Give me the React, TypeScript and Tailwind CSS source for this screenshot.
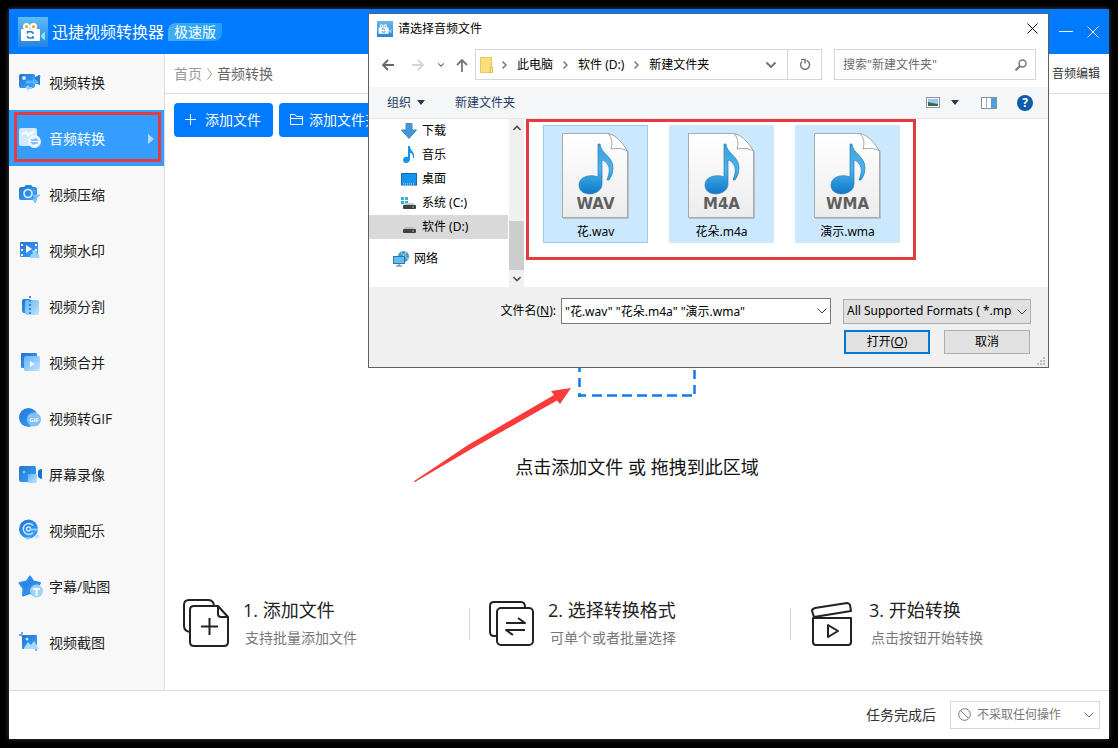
import type { ReactNode } from 'react'

interface NavItem {
  label: string
  icon: ReactNode
}

const NAV_ITEMS: NavItem[] = [
  {
    label: '视频转换',
    icon: (
      <>
        <rect x="0" y="2" width="16" height="14" rx="2" fill="url(#deep)" />
        <circle cx="5" cy="6" r="2" fill="#cfe8ff" />
        <path d="M16 5 L20 3 Q22 3 21 6 V13 L16 11 Z" fill="#1f7fdc" />
        <path d="M8 8.500 H14 V6 L20 10 L14 14 V11.500 H6 Z" fill="#51b4ff" />
        <path d="M6 15 L10 13 V15 H13 V17 H10 V19 Z" fill="#8fd0ff" />
      </>
    ),
  },
  {
    label: '音频转换',
    icon: (
      <>
        <rect x="0" y="0" width="18" height="18" rx="2" fill="#d3e8ff" />
        <path d="M3 6 L7 4 L9 7 L15 3" stroke="#fff" strokeWidth="2" fill="none" />
        <circle cx="15.500" cy="13.500" r="6.500" fill="#eef6ff" />
        <path d="M12 12 H18 L16 10.500 M19 15 H13 L15 16.500" stroke="#6db5fa" strokeWidth="1.300" fill="none" />
      </>
    ),
  },
  {
    label: '视频压缩',
    icon: (
      <>
        <path d="M5 3 L7 1 H12 L14 3 H16 Q18 3 18 5 V14 Q18 16 16 16 H2 Q0 16 0 14 V5 Q0 3 2 3 Z" fill="url(#deep)" />
        <circle cx="9" cy="9.500" r="4" fill="none" stroke="#d5ecff" strokeWidth="1.700" />
        <path d="M14 6 L16 7 M14 11.500 L21 11 L17 14.500 Z M14 15 L18 15 L16 19 Z" fill="#7cc4ff" stroke="#7cc4ff" />
      </>
    ),
  },
  {
    label: '视频水印',
    icon: (
      <>
        <rect x="1" y="2" width="18" height="15" rx="1" fill="url(#deep)" />
        <path d="M3 4 V16 M17 4 V12" stroke="#e8f5ff" strokeWidth="2" strokeDasharray="2 3" />
        <path d="M7 5 L13 9 L7 13 Z" fill="#fff" />
        <path d="M11 18 Q11 14 14 13.500 Q12 11 15 10 Q19 10 17.500 13.500 Q21 14 20.500 18 Z" fill="#9ad2ff" />
      </>
    ),
  },
  {
    label: '视频分割',
    icon: (
      <>
        <rect x="3" y="3" width="9" height="14" rx="2" fill="url(#deep)" />
        <rect x="6" y="4" width="14" height="15" rx="2" fill="url(#pale)" />
        <path d="M11 0 V20" stroke="#1670d8" strokeWidth="1.500" strokeDasharray="2 2" />
      </>
    ),
  },
  {
    label: '视频合并',
    icon: (
      <>
        <rect x="2" y="1" width="16" height="15" rx="1" fill="url(#deep)" />
        <rect x="5" y="4" width="16" height="15" rx="2" fill="url(#pale)" />
        <path d="M11 9 L16 12 L11 15 Z" fill="#e6fbff" />
      </>
    ),
  },
  {
    label: '视频转GIF',
    icon: (
      <>
        <circle cx="9.500" cy="9.500" r="9.500" fill="url(#deep)" />
        <circle cx="15" cy="11.500" r="7" fill="#7fc2fb" />
        <text x="15" y="14" fontSize="6" fontWeight="bold" textAnchor="middle" fill="#fff">GIF</text>
      </>
    ),
  },
  {
    label: '屏幕录像',
    icon: (
      <>
        <rect x="0" y="2" width="17" height="16" rx="2" fill="url(#deep)" />
        <circle cx="5" cy="8" r="1.500" fill="#6fc5ff" />
        <path d="M19 8 Q19 5 23 5 V15 Q19 14 19 12 Z" fill="#1272da" />
        <rect x="9" y="10" width="9" height="9" rx="1" fill="url(#pale)" />
      </>
    ),
  },
  {
    label: '视频配乐',
    icon: (
      <>
        <circle cx="9.500" cy="9" r="9.500" fill="url(#deep)" />
        <path d="M14 5.500 A5.500 5.500 0 1 0 14 12.500" fill="none" stroke="#cfe9ff" strokeWidth="1.500" />
        <circle cx="9.500" cy="9" r="2" fill="none" stroke="#cfe9ff" strokeWidth="1.500" />
        <path d="M11 8.500 H19 V10.500 H11 Z M5 17.500 L9 20 L12 17.500 Z" fill="#8fd0ff" />
        <circle cx="18" cy="16.500" r="2" fill="#bfe0fb" />
      </>
    ),
  },
  {
    label: '字幕/贴图',
    icon: (
      <>
        <path
          d="M11 0.500 L14.500 5.500 L21 7 L17.500 12.500 L17.500 19 L11 17 L4 19.500 L4.500 12.500 L0.500 7 L7.500 5.500 Z"
          fill="url(#deep)"
          stroke="#2b8ff0"
          strokeWidth="2"
          strokeLinejoin="round"
        />
        <circle cx="17.500" cy="15" r="6.500" fill="#9fd2fb" />
        <path d="M14 13 H21 M17.500 13 V19.500" stroke="#fff" strokeWidth="2" />
      </>
    ),
  },
  {
    label: '视频截图',
    icon: (
      <>
        <rect x="3" y="3" width="15" height="14" rx="1" fill="url(#deep)" />
        <path d="M0 3 H2 M3 0 V5 M17 15 V19" stroke="#2d8ff0" strokeWidth="1.300" />
        <path d="M5 16 L9 10 L12 13 L15 9 L20 17 H5 Z" fill="#a9dbff" />
        <circle cx="8" cy="7" r="1.500" fill="#bfe5ff" />
      </>
    ),
  },
]

const ACTIVE_LABEL = '音频转换'

const FILES = [
  { name: '花.wav', type: 'WAV', focused: true },
  { name: '花朵.m4a', type: 'M4A', focused: false },
  { name: '演示.wma', type: 'WMA', focused: false },
]

const STEPS = [
  { title: '1. 添加文件', desc: '支持批量添加文件', icon: <AddFileIcon /> },
  { title: '2. 选择转换格式', desc: '可单个或者批量选择', icon: <FormatIcon /> },
  { title: '3. 开始转换', desc: '点击按钮开始转换', icon: <ClapperIcon /> },
]

function Gradients() {
  return (
    <svg className="absolute h-0 w-0" aria-hidden="true">
      <defs>
        <linearGradient id="deep" x1="0" y1="0" x2="1" y2="1">
          <stop offset="0" stopColor="#2474cf" />
          <stop offset="1" stopColor="#3ba4ff" />
        </linearGradient>
        <linearGradient id="pale" x1="0" y1="0" x2="1" y2="1">
          <stop offset="0" stopColor="#5fb4fb" />
          <stop offset="1" stopColor="#c3e4ff" />
        </linearGradient>
        <linearGradient id="note" x1="0" y1="0" x2="0" y2="1">
          <stop offset="0" stopColor="#3f9fd8" />
          <stop offset="0.500" stopColor="#49b4ee" />
          <stop offset="1" stopColor="#0f78c8" />
        </linearGradient>
        <linearGradient id="paper" x1="0" y1="0" x2="0" y2="1">
          <stop offset="0" stopColor="#ffffff" />
          <stop offset="1" stopColor="#ececec" />
        </linearGradient>
        <linearGradient id="logo" x1="0" y1="0" x2="0" y2="1">
          <stop offset="0" stopColor="#5fbcf5" />
          <stop offset="1" stopColor="#2583e2" />
        </linearGradient>
      </defs>
    </svg>
  )
}

function Logo({ className }: { className: string }) {
  return (
    <svg viewBox="0 0 30 30" className={className} aria-hidden="true">
      <rect width="30" height="30" fill="url(#logo)" />
      <circle cx="8.500" cy="9.500" r="3.500" fill="#fff" />
      <circle cx="15.500" cy="9.500" r="3.500" fill="#fff" />
      <circle cx="8.500" cy="9.500" r="1.600" fill="#f5a623" />
      <circle cx="15.500" cy="9.500" r="1.600" fill="#f5a623" />
      <rect x="3" y="12" width="19" height="12" rx="1" fill="#fff" />
      <path d="M23 18 L27 14.500 V23.500 L23 20 Z" fill="#8fe0ff" />
      <path d="M9.500 16.500 V14.800 H13 Q15 15 15 17 M15 19 V21 H11.500 Q9.500 21 9.500 19" fill="none" stroke="#2b79c9" strokeWidth="1.500" />
    </svg>
  )
}

function AddFileIcon() {
  return (
    <svg viewBox="0 0 48 50" className="h-[50px] w-12 shrink-0" fill="none" stroke="#222" strokeWidth="2" strokeLinejoin="round">
      <path d="M7 34 Q1 33 1 28 V7 Q1 2 6 2 H25 Q30 2 31 7" />
      <path d="M35 8 H11 Q7 8 7 12 V44 Q7 48 11 48 H41 Q45 48 45 44 V19 L35 8 V16 Q35 19 38 19 H45" />
      <path d="M26.500 20 V37 M18 28.500 H35" />
    </svg>
  )
}

function FormatIcon() {
  return (
    <svg viewBox="0 0 48 50" className="h-[50px] w-12 shrink-0" fill="none" stroke="#222" strokeWidth="2" strokeLinejoin="round">
      <path d="M9 38 H6 Q2 38 2 34 V8 Q2 4 6 4 H33 Q37 4 37 9" />
      <rect x="9" y="10" width="36" height="37" rx="4" />
      <path d="M18 25 H37 L30 20 M37 32 H18 L25 37" />
    </svg>
  )
}

function ClapperIcon() {
  return (
    <svg viewBox="0 0 48 50" className="h-[50px] w-12 shrink-0" fill="none" stroke="#222" strokeWidth="2" strokeLinejoin="round">
      <path d="M5 19 L3 13 Q3 11 6 10 L38 5 Q40 5 41 7 L42 13 Z" />
      <path d="M4 20 H42 V44 Q42 47 39 47 H7 Q4 47 4 44 Z" />
      <path d="M19 27 V39 L29 33 Z" />
    </svg>
  )
}

function Chevron({ className }: { className: string }) {
  return (
    <svg viewBox="0 0 10 6" className={className} fill="none" stroke="currentColor" aria-hidden="true">
      <path d="M0.500 0.500 L5 5 L9.500 0.500" />
    </svg>
  )
}

function CrumbArrow() {
  return (
    <svg viewBox="0 0 5 8" className="h-2 w-[5px] shrink-0" fill="none" stroke="#777" strokeWidth="1.500" aria-hidden="true">
      <path d="M0.500 0.500 L4 4 L0.500 7.500" />
    </svg>
  )
}

function TitleBar() {
  return (
    <header className="flex h-[45px] items-center bg-[#007bff] pr-[10px] pl-[9px] text-white">
      <Logo className="h-[30px] w-[30px]" />
      <h1 className="ml-1 text-base font-normal">迅捷视频转换器</h1>
      <span className="ml-1 rounded-tl-lg rounded-br-lg bg-gradient-to-r from-[#41adf5] to-[#1d9ff5] px-1.5 text-sm leading-[18px]">
        极速版
      </span>
      <div className="ml-auto flex items-center gap-[14px]">
        <button aria-label="最小化">
          <svg viewBox="0 0 14 12" className="h-3 w-[14px]" stroke="currentColor">
            <path d="M0 5.500 H14" />
          </svg>
        </button>
        <button aria-label="关闭">
          <svg viewBox="0 0 12 12" className="h-3 w-3" stroke="currentColor">
            <path d="M0.500 0.500 L11.500 11.500 M11.500 0.500 L0.500 11.500" />
          </svg>
        </button>
      </div>
    </header>
  )
}

function Sidebar() {
  return (
    <nav className="w-[156px] shrink-0 border-r border-[#dcdcdc] bg-[#f8f8f8]">
      {NAV_ITEMS.map((item) => {
        const active = item.label === ACTIVE_LABEL
        return (
          <button
            key={item.label}
            className={`relative flex h-14 w-full items-center gap-2 pt-0.5 pl-[10px] text-sm ${
              active ? 'bg-[#349dff] text-white' : 'text-[#1c1c1c]'
            }`}
          >
            <svg viewBox="0 0 22 22" className="h-[22px] w-[22px] shrink-0 overflow-visible" aria-hidden="true">
              {item.icon}
            </svg>
            {item.label}
            {active && (
              <>
                <svg viewBox="0 0 6 10" className="mr-[10px] ml-auto h-[10px] w-[6px]" aria-hidden="true">
                  <path d="M0 0 L6 5 L0 10 Z" fill="#b5dbff" />
                </svg>
                <span className="absolute top-0.5 right-[3px] bottom-1 left-[5px] border-3 border-[#e23c41]" />
              </>
            )}
          </button>
        )
      })}
    </nav>
  )
}

function DropZone() {
  return (
    <div className="flex flex-1 flex-col items-center justify-center gap-14 pt-6">
      <svg viewBox="0 0 118 118" className="h-[118px] w-[118px]" fill="none" stroke="#0f7bef" strokeWidth="2.500" aria-hidden="true">
        <path d="M1.500 118 V1" strokeDasharray="4 6 9 6 9 6 9 6 9 6 9 6 9 6 9 6" />
        <path d="M116.500 115 V1" strokeDasharray="9 6" />
        <path d="M0 1.500 H118" strokeDasharray="10 5" />
        <path d="M0 116.500 H8 M14 116.500 H118" strokeDasharray="10 5" />
      </svg>
      <p className="text-lg leading-7 text-[#111]">点击添加文件 或 拖拽到此区域</p>
    </div>
  )
}

function Steps() {
  return (
    <ol className="grid grid-cols-[304fr_321fr_319fr] pb-10">
      {STEPS.map((step, i) => (
        <li key={step.title} className="flex items-center">
          {i > 0 && <span className="h-8 w-px bg-[#d4d4d4]" />}
          <div className="flex gap-3 pl-[18px]">
            {step.icon}
            <div>
              <h2 className="text-lg leading-6 text-[#222]">{step.title}</h2>
              <p className="mt-1 pl-0.5 text-sm leading-6 text-[#777]">{step.desc}</p>
            </div>
          </div>
        </li>
      ))}
    </ol>
  )
}

function FileTile({ name, type, focused }: { name: string; type: string; focused: boolean }) {
  return (
    <button
      className={`flex h-[118px] w-[105px] shrink-0 flex-col items-center border bg-[#cce8ff] pt-1.5 ${
        focused ? 'border-[#99ccf5]' : 'border-[#cce8ff]'
      }`}
    >
      <svg viewBox="0 0 68 88" className="h-[88px] w-[68px] shrink-0" aria-hidden="true">
        <path d="M1 2 H48 Q56 4 67 20 V87 H1 Z" fill="#8b8b8b" opacity="0.400" />
        <path d="M0.500 1.500 H46 Q54 3 65.500 19 V85.500 H0.500 Z" fill="url(#paper)" stroke="#a7a9ab" />
        <path d="M46 1.500 Q52 8 49 17 Q59 15 65.500 19 Q56 3 46 1.500 Z" fill="#fff" stroke="#a9a9a9" />
        <path
          d="M36 12 H38 C39 22 51 24 51 36 Q51 43 47 48 H45 Q49 38 46 33 Q43 28 40 28 V52 C40 64 17 66 17 53 C17 44 29 42 36 45 Z"
          fill="url(#note)"
          stroke="#2f7fb5"
          strokeWidth="0.700"
        />
        <text x="33.500" y="77" fontFamily="DejaVu Sans, sans-serif" fontSize="15" fontWeight="700" textAnchor="middle" fill="#606060">
          {type}
        </text>
      </svg>
      <span className="mt-1 text-xs leading-4 text-black">{name}</span>
    </button>
  )
}

function DialogTree() {
  return (
    <ul className="min-w-0 flex-1 text-xs text-black">
      <li className="flex h-6 items-center gap-[5px] pl-8">
        <svg viewBox="0 0 16 16" className="h-4 w-4">
          <path d="M5 0.500 H11 V7 H15.500 L8 15.500 L0.500 7 H5 Z" fill="#3f97dd" stroke="#4c86b8" />
        </svg>
        下载
      </li>
      <li className="flex h-6 items-center gap-[5px] pl-8">
        <svg viewBox="0 0 16 18" className="h-[18px] w-4">
          <path d="M7 0 H9 C9 5 14 5 13 12 H12 Q12 7 9 7 V13 C9 18 2 18 2 14 C2 11 5 10 7 11 Z" fill="#1194ee" />
        </svg>
        音乐
      </li>
      <li className="flex h-6 items-center gap-[5px] pl-8">
        <svg viewBox="0 0 16 13" className="h-[13px] w-4">
          <rect x="0.500" y="0.500" width="15" height="11.500" fill="#1595ef" stroke="#1668ad" />
          <path d="M2 11 H14" stroke="#cbe9ff" strokeDasharray="1 1" />
        </svg>
        桌面
      </li>
      <li className="flex h-6 items-center gap-[5px] pl-8">
        <svg viewBox="0 0 16 14" className="h-[14px] w-4">
          <path d="M0 1 H3 V4 H0 Z M4 1 H7 V4 H4 Z M0 5 H3 V8 H0 Z M4 5 H7 V8 H4 Z" fill="#2bb5d8" />
          <path d="M4 7 H12 L15 10 H2 Z" fill="#c8c8c8" />
          <rect x="2" y="9" width="13" height="4" rx="1" fill="#404040" />
          <rect x="11" y="10.500" width="2" height="1" fill="#62e08a" />
        </svg>
        系统 (C:)
      </li>
      <li className="flex h-6 items-center gap-[5px] bg-[#d9d9d9] pl-8">
        <svg viewBox="0 0 16 14" className="h-[14px] w-4">
          <path d="M4 7 H12 L15 10 H2 Z" fill="#bcbcbc" />
          <rect x="2" y="9" width="13" height="4" rx="1" fill="#404040" />
          <rect x="11" y="10.500" width="2" height="1" fill="#62e08a" />
        </svg>
        软件 (D:)
      </li>
      <li className="mt-2 flex h-6 items-center gap-[5px] pl-6">
        <svg viewBox="0 0 16 16" className="h-4 w-4">
          <circle cx="10.500" cy="5.500" r="5.500" fill="#4d9ac6" />
          <path d="M8 2 Q12 4 11 10 M13 1 Q10 5 15 8" stroke="#a9d8ee" fill="none" />
          <rect x="0.500" y="5.500" width="11" height="7" fill="#64bdf2" stroke="#2b77ae" />
          <path d="M3 15 H9 M6 13 V15" stroke="#2b77ae" />
        </svg>
        网络
      </li>
    </ul>
  )
}

function FileDialog() {
  return (
    <section
      role="dialog"
      aria-label="请选择音频文件"
      className="absolute top-1 right-[60px] left-[359px] border border-[#5c5f63] bg-white font-['Noto_Sans','Noto_Sans_CJK_SC',sans-serif] text-xs text-black"
    >
      <div className="flex h-[29px] items-center pr-[10px] pl-2">
        <Logo className="h-4 w-4" />
        <span className="ml-[5px]">请选择音频文件</span>
        <button aria-label="关闭" className="ml-auto">
          <svg viewBox="0 0 11 11" className="h-[11px] w-[11px]" stroke="currentColor">
            <path d="M0.500 0.500 L10.500 10.500 M10.500 0.500 L0.500 10.500" />
          </svg>
        </button>
      </div>

      {/* Address bar */}
      <div className="flex items-center pt-1.5 pr-3 pb-[7px] pl-[13px]">
        <button aria-label="后退">
          <svg viewBox="0 0 12 12" className="h-3 w-3" fill="none" stroke="#666" strokeWidth="1.800">
            <path d="M12 6 H1 M6 1 L1 6 L6 11" />
          </svg>
        </button>
        <button aria-label="前进" className="ml-[18px]">
          <svg viewBox="0 0 12 12" className="h-3 w-3" fill="none" stroke="#d3d3d3" strokeWidth="1.800">
            <path d="M0 6 H11 M6 1 L11 6 L6 11" />
          </svg>
        </button>
        <button aria-label="最近浏览的位置" className="ml-[14px] text-[#777]">
          <Chevron className="h-1 w-1.5 stroke-2" />
        </button>
        <button aria-label="上移" className="ml-3">
          <svg viewBox="0 0 12 14" className="h-[14px] w-3" fill="none" stroke="#777" strokeWidth="1.800">
            <path d="M6 14 V2 M1 7 L6 2 L11 7" />
          </svg>
        </button>
        <div className="ml-[7px] flex h-[31px] min-w-0 flex-1 items-center border border-[#d6d6d6]">
          <svg viewBox="0 0 13 16" className="ml-1 h-4 w-[13px] shrink-0" aria-hidden="true">
            <path d="M0.500 0.500 H11.500 V15.500 H0.500 Z" fill="#fbdf7c" stroke="#e9c65a" />
            <path d="M10.500 10 H12.500 V15.500 H10.500 Z" fill="#fff0b3" stroke="#dcb94d" />
          </svg>
          <div className="ml-[9px] flex items-center gap-2.5 whitespace-nowrap">
            <CrumbArrow />
            <span>此电脑</span>
            <CrumbArrow />
            <span>软件 (D:)</span>
            <CrumbArrow />
            <span>新建文件夹</span>
          </div>
          <button aria-label="以前的位置" className="mr-[11px] ml-auto text-[#777]">
            <Chevron className="h-1.5 w-2.5 stroke-2" />
          </button>
          <button aria-label="刷新" className="flex h-full w-[34px] items-center justify-center border-l border-[#d6d6d6]">
            <svg viewBox="0 0 12 13" className="h-[13px] w-3" fill="none" stroke="#777" strokeWidth="1.500">
              <path d="M7.500 2.500 A4.500 4.500 0 1 1 3 3.500 M2 1.500 H6 V5.500" />
            </svg>
          </button>
        </div>
        <label className="ml-3 flex h-[31px] w-[202px] items-center border border-[#d6d6d6] pr-2 pl-2">
          <input
            type="text"
            aria-label="搜索"
            placeholder={'搜索"新建文件夹"'}
            className="min-w-0 flex-1 text-xs outline-none placeholder:text-[#6b6b6b]"
          />
          <svg viewBox="0 0 12 12" className="h-3 w-3" fill="none" stroke="#777" strokeWidth="1.500" aria-hidden="true">
            <circle cx="7.500" cy="4.500" r="3.500" />
            <path d="M5 7 L0.500 11.500" strokeWidth="2" />
          </svg>
        </label>
      </div>

      {/* Command bar */}
      <div className="flex h-8 items-center border-b border-[#e4e6e8] bg-[#f4f6f8] pr-[15px] pl-[18px] text-[#1e3a5f]">
        <button className="flex items-center gap-1.5">
          组织
          <svg viewBox="0 0 8 5" className="h-[5px] w-2" fill="currentColor">
            <path d="M0 0 H8 L4 5 Z" />
          </svg>
        </button>
        <button className="ml-[30px]">新建文件夹</button>
        <button aria-label="更改视图" className="ml-auto flex items-center gap-[11px]">
          <svg viewBox="0 0 14 11" className="h-[11px] w-[14px]">
            <rect x="0.500" y="0.500" width="13" height="10" fill="#fff" stroke="#8b959e" />
            <path d="M2 2 H12 V9 H2 Z" fill="#9cc6ee" />
            <path d="M2 5 L6 6 L12 7 V9 H2 Z" fill="#396653" />
          </svg>
          <svg viewBox="0 0 8 5" className="h-[5px] w-2" fill="currentColor">
            <path d="M0 0 H8 L4 5 Z" />
          </svg>
        </button>
        <button aria-label="显示预览窗格" className="ml-[22px]">
          <svg viewBox="0 0 16 12" className="h-3 w-4">
            <rect x="0.500" y="0.500" width="15" height="11" fill="#fff" stroke="#8493a0" />
            <path d="M5.500 1 V11" stroke="#a9b3bc" />
            <rect x="10" y="1" width="5" height="10" fill="#4d9fe0" />
          </svg>
        </button>
        <button
          aria-label="获取帮助"
          className="ml-5 flex h-4 w-4 items-center justify-center rounded-full bg-[#0b5cab] text-xs leading-4 font-bold text-white"
        >
          ?
        </button>
      </div>

      <div className="flex h-[168px]">
        <div className="flex w-[155px] shrink-0">
          <DialogTree />
          <div className="ml-px flex w-[15px] flex-col items-center bg-[#f0f0f0] text-[#505050]">
            <Chevron className="mt-1.5 h-1.5 w-2 rotate-180 stroke-2" />
            <span className="mt-auto h-[49px] w-full bg-[#cdcdcd]" />
            <Chevron className="mt-1.5 mb-[5px] h-1.5 w-2 stroke-2" />
          </div>
        </div>
        <div className="relative flex min-w-0 flex-1 items-start gap-[21px] pt-1.5 pl-[19px]">
          {FILES.map((file) => (
            <FileTile key={file.name} {...file} />
          ))}
          <span className="pointer-events-none absolute top-0 left-0.5 h-[141px] w-[390px] border-3 border-[#e23c41]" />
        </div>
      </div>

      <div className="relative bg-[#f0f0f0] pt-[11px] pr-[17px] pb-[13px]">
        <div className="flex items-center justify-end">
          <label htmlFor="filename">
            文件名(<u>N</u>):
          </label>
          <div className="relative ml-[5px] w-[270px]">
            <input
              id="filename"
              type="text"
              defaultValue={'"花.wav" "花朵.m4a" "演示.wma"'}
              className="block h-[26px] w-full border border-[#7a7a7a] bg-white pr-5 pl-[3px] text-xs"
            />
            <Chevron className="absolute top-2.5 right-1 h-1.5 w-2.5 text-[#444]" />
          </div>
          <div className="relative ml-3 w-[188px]">
            <select
              aria-label="文件类型"
              className="block h-[25px] w-full appearance-none border border-[#adadad] bg-[#e1e1e1] pr-[18px] pl-[3px] text-xs"
            >
              <option>All Supported Formats ( *.mp3; *.wav; *.m4a; *.wma )</option>
            </select>
            <Chevron className="absolute top-2.5 right-1 h-1.5 w-2.5 text-[#444]" />
          </div>
        </div>
        <div className="mt-1.5 flex justify-end gap-[14px] pr-px">
          <button className="h-6 w-[86px] border-2 border-[#0078d7] bg-[#e1e1e1]">
            打开(<u>O</u>)
          </button>
          <button className="h-6 w-[86px] border border-[#adadad] bg-[#e1e1e1]">取消</button>
        </div>
        <svg viewBox="0 0 8 8" className="absolute right-[3px] bottom-0.5 h-2 w-2" fill="#bdbdbd" aria-hidden="true">
          <path d="M6 0 H8 V2 H6 Z M3 3 H5 V5 H3 Z M6 3 H8 V5 H6 Z M0 6 H2 V8 H0 Z M3 6 H5 V8 H3 Z M6 6 H8 V8 H6 Z" />
        </svg>
      </div>
    </section>
  )
}

export default function App() {
  return (
    <div className="flex min-h-screen bg-black p-[9px] font-['Open_Sans','Noto_Sans_CJK_SC',sans-serif]">
      <Gradients />
      <div className="relative flex min-w-0 flex-1 flex-col bg-white shadow-[0_0_5px_#444]">
        <TitleBar />
        <div className="flex flex-1">
          <Sidebar />
          <main className="flex min-w-0 flex-1 flex-col">
            <div className="flex h-10 items-center border-b border-[#dcdcdc] pr-[9px] pl-[9px] text-sm">
              <a href="#home" className="text-[#999]">首页</a>
              <svg viewBox="0 0 5 12" className="mx-[5px] h-3 w-[5px]" fill="none" stroke="#999" aria-hidden="true">
                <path d="M0.500 0.500 L4.500 6 L0.500 11.500" />
              </svg>
              <span className="text-[#666]">音频转换</span>
              <a href="#edit" className="ml-auto text-xs text-[#333]">音频编辑</a>
            </div>
            <div className="flex gap-1.5 px-[9px] pt-[9px] text-sm text-white">
              <button className="flex h-[34px] items-center gap-2 rounded bg-[#007bff] pr-3 pl-[11px]">
                <svg viewBox="0 0 12 12" className="h-3 w-3" stroke="currentColor">
                  <path d="M5.500 0 V11 M0 5.500 H11" />
                </svg>
                添加文件
              </button>
              <button className="flex h-[34px] items-center gap-1.5 rounded bg-[#007bff] pr-3 pl-[11px]">
                <svg viewBox="0 0 13 12" className="h-3 w-[13px]" fill="none" stroke="currentColor">
                  <path d="M0.500 10.500 V0.500 H5 L6.500 2.500 H12.500 V10.500 Z M0.500 4.500 H12.500" />
                </svg>
                添加文件夹
              </button>
            </div>
            <DropZone />
            <Steps />
          </main>
        </div>
        <footer className="flex h-[49px] items-center justify-end border-t border-[#dcdcdc] pr-[9px]">
          <label htmlFor="after" className="text-sm text-[#333]">任务完成后</label>
          <div className="relative ml-[14px] w-[150px] text-[#777]">
            <svg viewBox="0 0 13 13" className="absolute top-[7px] left-2 h-[13px] w-[13px]" fill="none" stroke="currentColor" aria-hidden="true">
              <circle cx="6.500" cy="6.500" r="5.800" />
              <path d="M2.500 2.500 L10.500 10.500" />
            </svg>
            <select id="after" className="block h-7 w-full appearance-none border border-[#d8d8d8] bg-transparent pl-[26px] text-xs">
              <option>不采取任何操作</option>
            </select>
            <Chevron className="absolute top-[11px] right-1.5 h-1.5 w-2.5" />
          </div>
        </footer>

        <FileDialog />

        {/* Pointer from the drop area to the picked files */}
        <svg viewBox="0 0 160 96" className="pointer-events-none absolute top-[378px] left-[404px] h-24 w-40" aria-hidden="true">
          <path d="M0.500 94.500 L55 58 L141 8 L138 4 L158 1 L147 17 L144 13.500 L60 61 L2 95 Z" fill="#fb3b3b" />
        </svg>
      </div>
    </div>
  )
}
